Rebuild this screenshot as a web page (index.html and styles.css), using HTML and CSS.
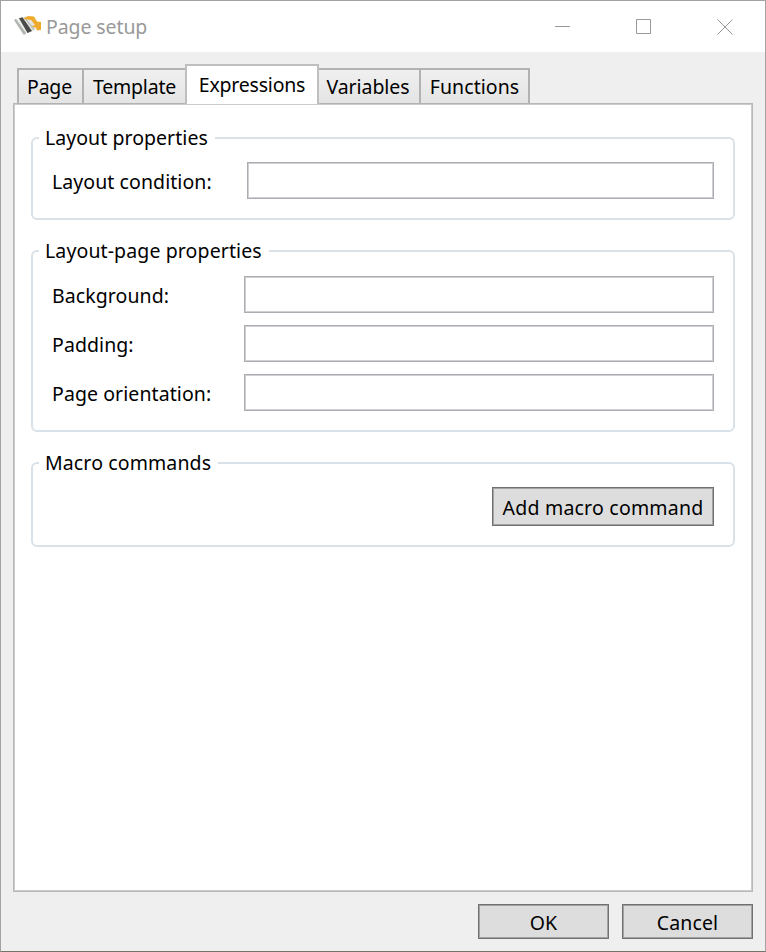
FILE: index.html
```html
<!DOCTYPE html>
<html lang="en">
<head>
<meta charset="utf-8">
<title>Page setup</title>
<link rel="stylesheet" href="styles.css">
</head>
<body>
<div class="window">
  <header class="titlebar">
    <svg class="logo" width="28" height="22" viewBox="0 0 28 22">
      <path d="M0 5 L12 1 L22 15 L9 20 Z" fill="#eceeec"/>
      <path d="M0 5 L2 4 L12 18 L10 20 Z" fill="#aeb4b0"/>
      <path d="M5 3.200 L8.500 2.200 L18 16 L13.500 18 Z" fill="#484b49"/>
      <path d="M10 3 L12 2 L21 14 L19 15Z" fill="#bdc2bf"/>
      <path d="M9.500 3.500 L14 1 L20 1.500 L23 6.500 L27 7 L27 15 L23 15.500 L22 13 L17 11 L19 9.500 L14 5Z" fill="#efab2d"/>
      <path d="M13 4.500 L17 5 L21 10 L18 11Z" fill="#e3e6e4"/>
    </svg>
    <h1 class="title">Page setup</h1>
    <svg class="controls" width="180" height="17" viewBox="0 0 180 17" fill="none" stroke="#999">
      <path d="M1 8.500h15M82.500 1.500h14v14h-14zM163.500 1.500l15 15M178.500 1.500l-15 15"/>
    </svg>
  </header>
  <main class="body">
    <nav class="tabs">
      <div class="tab tab-page">Page</div>
      <div class="tab tab-template">Template</div>
      <div class="tab tab-expressions active">Expressions</div>
      <div class="tab tab-variables">Variables</div>
      <div class="tab tab-functions">Functions</div>
    </nav>
    <section class="panel">
      <fieldset class="group layout">
        <legend>Layout properties</legend>
        <div class="row"><label for="condition">Layout condition:</label><input id="condition" class="narrow"></div>
      </fieldset>
      <fieldset class="group layout-page">
        <legend>Layout-page properties</legend>
        <div class="row"><label for="background">Background:</label><input id="background"></div>
        <div class="row"><label for="padding">Padding:</label><input id="padding"></div>
        <div class="row"><label for="orientation">Page orientation:</label><input id="orientation"></div>
      </fieldset>
      <fieldset class="group macros">
        <legend>Macro commands</legend>
        <button class="add">Add macro command</button>
      </fieldset>
    </section>
    <footer class="actions">
      <button>OK</button>
      <button>Cancel</button>
    </footer>
  </main>
</div>
</body>
</html>
```
FILE: styles.css
```css
* { box-sizing: border-box; }
body { margin: 0; background: #efefef; color: #000; font: 19.5px/26px "Noto Sans", sans-serif; letter-spacing: 0.05px; }
.window { height: 952px; border: 1px solid #a3a3a3; border-bottom-color: #77736b; background: #efefef; }
.titlebar { height: 51px; padding: 0 31px 0 13px; display: flex; align-items: center; background: #fff; }
.logo { margin: 0 4px 2px 0; filter: blur(.35px); }
.title { margin: 0; padding-top: 1px; font: inherit; letter-spacing: -0.1px; color: #999; }
.controls { margin-left: auto; }
.body { padding: 12px 12px 0; }
.tabs { height: 40px; padding-left: 4px; display: flex; align-items: flex-end; position: relative; z-index: 1; letter-spacing: -0.2px; }
.tab { height: 36px; border: 2px solid #b2b2b2; border-width: 2px 1px 1px; background: linear-gradient(#f0f0f0, #e4e4e4); display: flex; align-items: center; justify-content: center; white-space: nowrap; }
.tab-page { width: 66px; border-left-width: 2px; padding-right: 2px; }
.tab-template { width: 103px; }
.tab-expressions { width: 134px; margin: 0 -1px; z-index: 1; }
.tab-variables { width: 102px; padding-right: 2px; letter-spacing: -0.05px; }
.tab-functions { width: 110px; border-right-width: 2px; letter-spacing: 0.05px; }
.active { height: 40px; border-width: 2px 2px 0; border-color: #bfbfbf; background: #fff; }
.panel { height: 789px; margin-top: -1px; padding: 21px 17px 0; border: 1px solid #b8b8b8; box-shadow: inset 0 0 0 1px #cbcbcb; background: #fff; }
.group { min-width: 0; margin: 0; padding: 11px 19px 0; border: 2px solid #dae2e9; border-radius: 6px; }
.layout { height: 95px; }
.layout-page { height: 194px; margin-top: 18px; padding-top: 12px; }
.macros { height: 97px; margin-top: 18px; }
legend { margin-left: -13px; padding: 0 7px 0 6px; }
.layout-page legend, .macros legend { letter-spacing: 0.12px; }
.row { height: 37px; display: flex; align-items: center; justify-content: space-between; }
.row + .row { margin-top: 12px; }
label { padding-top: 2px; letter-spacing: 0.08px; }
input { width: 470px; height: 37px; border: 1px solid #abadb3; box-shadow: inset 0 0 0 1px #cfd0d3; background: #fff; border-radius: 0; padding: 5px; font: inherit; }
.narrow { width: 467px; }
button { width: 131px; height: 35px; padding: 2px 0 0; border: 1px solid #707070; box-shadow: inset 0 0 0 1px #a3a3a3; border-radius: 0; background: #ddd; color: #000; font: inherit; letter-spacing: 0.15px; }
.add { display: block; width: 222px; height: 39px; margin-left: auto; letter-spacing: 0.22px; }
.actions { display: flex; justify-content: flex-end; gap: 13px; margin-top: 12px; }
```
